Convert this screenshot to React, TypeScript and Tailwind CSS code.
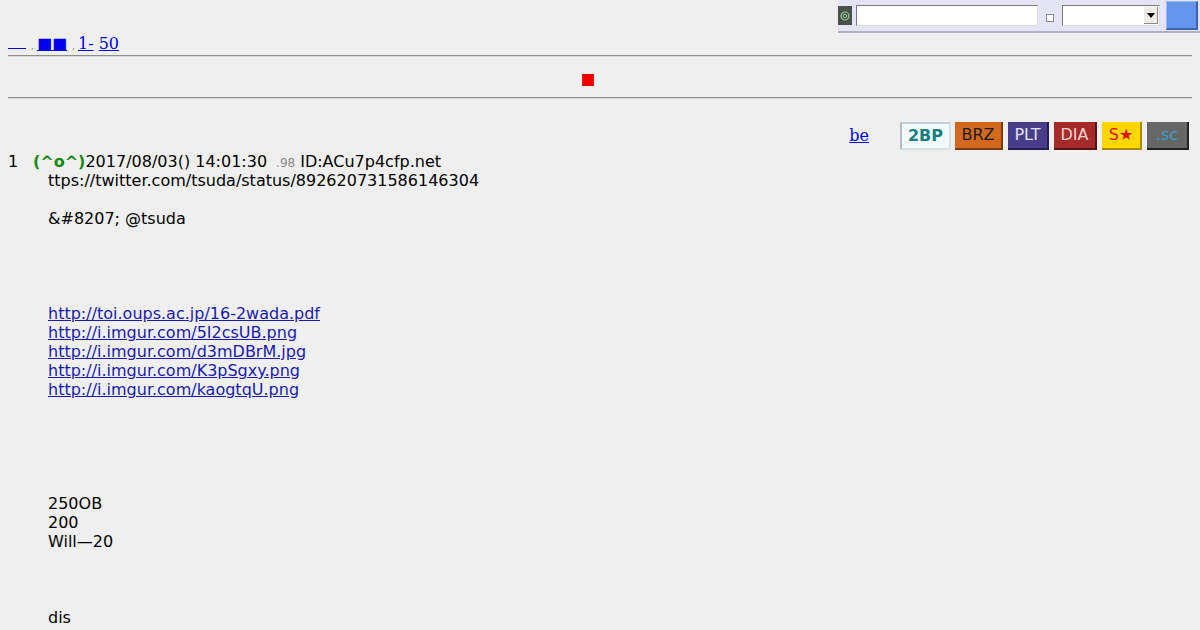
import React from "react";

const bodyLines: { t: string; link?: boolean }[] = [
  { t: "ttps://twitter.com/tsuda/status/892620731586146304" },
  { t: "" },
  { t: "&#8207; @tsuda" },
  { t: "" },
  { t: "" },
  { t: "" },
  { t: "" },
  { t: "http://toi.oups.ac.jp/16-2wada.pdf", link: true },
  { t: "http://i.imgur.com/5I2csUB.png", link: true },
  { t: "http://i.imgur.com/d3mDBrM.jpg", link: true },
  { t: "http://i.imgur.com/K3pSgxy.png", link: true },
  { t: "http://i.imgur.com/kaogtqU.png", link: true },
  { t: "" },
  { t: "" },
  { t: "" },
  { t: "" },
  { t: "" },
  { t: "250OB" },
  { t: "200" },
  { t: "Will\u201420" },
  { t: "" },
  { t: "" },
  { t: "" },
  { t: "dis" },
];

export default function App() {
  return (
    <div className="relative min-h-[630px] w-[1200px] overflow-hidden bg-[#efefef] px-[8px] font-['DejaVu_Sans',sans-serif] text-[16px] text-black">
      {/* floating top-right panel */}
      <div className="absolute right-0 top-0 flex h-[33px] w-[362px] items-center border-b-2 border-[#b0b0c8] bg-[#e4e4f6]">
        <div className="flex h-[19px] w-[14px] items-center justify-center bg-[#4c504c]">
          <svg width="10" height="10" viewBox="0 0 10 10">
            <circle cx="5" cy="5" r="4" fill="none" stroke="#8fcf8f" strokeWidth="1.2" />
            <circle cx="5" cy="5" r="1.8" fill="none" stroke="#8fcf8f" strokeWidth="1" />
          </svg>
        </div>
        <div className="ml-[4px] h-[21px] w-[182px] border border-b-[#dcdcdc] border-l-[#7a7a7a] border-r-[#dcdcdc] border-t-[#7a7a7a] bg-white" />
        <div className="ml-[8px] mt-[5px] h-[8px] w-[8px] border border-[#8a8a8a] bg-white" />
        <div className="ml-[8px] flex h-[21px] w-[98px] items-center justify-end border border-b-[#dcdcdc] border-l-[#7a7a7a] border-r-[#dcdcdc] border-t-[#7a7a7a] bg-white pr-[1px]">
          <div className="flex h-[17px] w-[14px] items-center justify-center border-b border-r border-[#8a8a8a] bg-[#ecebe6]">
            <svg width="8" height="5" viewBox="0 0 8 5">
              <path d="M0 0 L8 0 L4 5 Z" fill="#000" />
            </svg>
          </div>
        </div>
        <div className="ml-[6px] h-[29px] w-[32px] border-b-2 border-l border-r-2 border-t border-b-[#3c64b4] border-l-[#9cb8f0] border-r-[#3c64b4] border-t-[#9cb8f0] bg-[#6495ed]" />
      </div>

      {/* nav line */}
      <div className="h-[54px] pt-[34px]">
        <div className="flex h-[20px] items-baseline font-['DejaVu_Serif',serif] text-[16px] leading-[19px] text-[#0000ee]">
          <a className="inline-block h-[13px] w-[18px] border-b border-[#0000ee]" />
          <span className="ml-[5px] text-[9px] text-[#777]">,</span>
          <a className="ml-[3px] font-['DejaVu_Sans',sans-serif] underline">■■</a>
          <span className="ml-[5px] text-[9px] text-[#777]">,</span>
          <a className="ml-[3px] underline">1-</a>
          <span>&nbsp;</span>
          <a className="underline">50</a>
        </div>
      </div>

      <div className="mt-[1px] h-[2px] border-b border-t border-b-[#dadada] border-t-[#8e8e8e]" />

      <div className="ml-[574px] mt-[17px] h-[12px] w-[12px] bg-[#ee0000]" />

      <div className="mt-[11px] h-[2px] border-b border-t border-b-[#dadada] border-t-[#8e8e8e]" />

      {/* be + buttons */}
      <div className="mt-[23px] flex h-[28px] items-center justify-end pr-[3px]">
        <a className="mr-[31px] font-['DejaVu_Serif',serif] text-[16px] text-[#0000ee] underline">be</a>
        <div className="flex h-[28px] w-[51px] items-center justify-center border-2 border-b-[#d8e0e6] border-l-[#b4bcc4] border-r-[#d8e0e6] border-t-[#c4ccd4] bg-[#f2fafd] font-bold text-[#17807e]">
          2BP
        </div>
        <div className="ml-[4px] flex h-[28px] w-[48px] items-center justify-center border-b-2 border-r-2 border-b-[#7a3a0e] border-r-[#7a3a0e] bg-[#d2691e] text-[#1e1e1e]">
          BRZ
        </div>
        <div className="ml-[5px] flex h-[28px] w-[41px] items-center justify-center border-b-2 border-r-2 border-b-[#241d52] border-r-[#241d52] bg-[#483d8b] text-[#e2e2ee]">
          PLT
        </div>
        <div className="ml-[5px] flex h-[28px] w-[43px] items-center justify-center border-b-2 border-r-2 border-b-[#5a1414] border-r-[#5a1414] bg-[#a52a2a] text-[#fbd4cc]">
          DIA
        </div>
        <div className="ml-[5px] flex h-[28px] w-[40px] items-center justify-center border-b-2 border-r-2 border-b-[#a88a00] border-r-[#a88a00] bg-[#ffd700] text-[#e01010]">
          S★
        </div>
        <div className="ml-[5px] flex h-[28px] w-[42px] items-center justify-center border-b-2 border-r-2 border-b-[#222] border-r-[#222] bg-[#666666] text-[#3a9ccc]">
          .sc
        </div>
      </div>

      {/* post */}
      <div className="mt-[2px] leading-[19px]">
        <div className="flex h-[19px] items-baseline whitespace-nowrap">
          <span className="w-[25px]">1</span>
          <span className="font-bold text-[#108a10]">(^o^)</span>
          <span>2017/08/03() 14:01:30</span>
          <span className="ml-[9px] text-[12px] text-[#8a8a8a]">.98</span>
          <span className="ml-[5px]">ID:ACu7p4cfp.net</span>
        </div>
        <div className="pl-[40px]">
          {bodyLines.map((l, i) =>
            l.link ? (
              <div key={i} className="h-[19px]">
                <a className="text-[#1a1ab0] underline">{l.t}</a>
              </div>
            ) : (
              <div key={i} className="h-[19px] whitespace-pre">
                {l.t}
              </div>
            )
          )}
        </div>
      </div>
    </div>
  );
}
